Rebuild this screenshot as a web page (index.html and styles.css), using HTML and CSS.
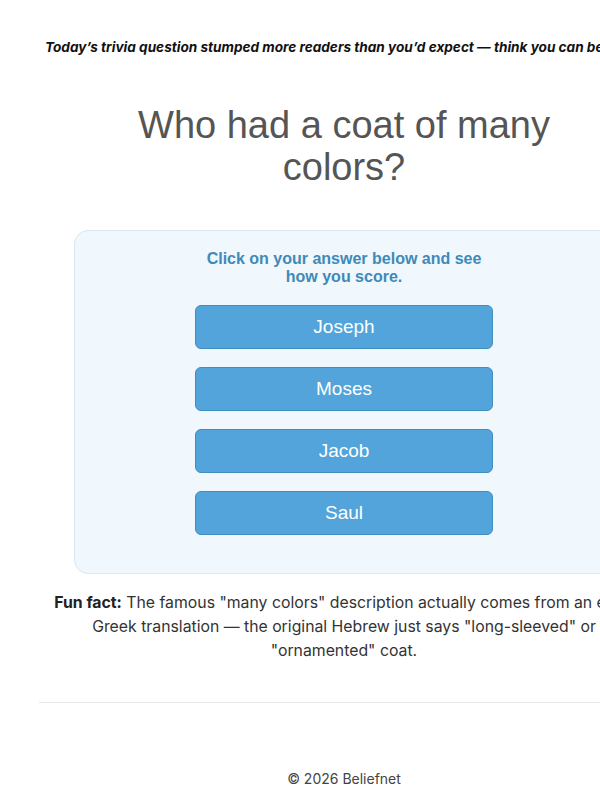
FILE: index.html
```html
<!DOCTYPE html>
<html lang="en">
<head>
    <meta charset="UTF-8">
    <title>Daily Bible Trivia</title>
    <link rel="stylesheet" href="styles.css">
</head>
<body>
<div class="page">

    <p class="teaser">Today’s trivia question stumped more readers than you’d expect — think you can beat the odds?</p>

    <h1 class="question">Who had a coat of many colors?</h1>

    <div class="quiz">
        <p class="prompt">Click on your answer below and see how you score.</p>
        <div class="answers">
            <button class="answer" type="button">Joseph</button>
            <button class="answer" type="button">Moses</button>
            <button class="answer" type="button">Jacob</button>
            <button class="answer" type="button">Saul</button>
        </div>
    </div>

    <p class="fact"><b>Fun fact:</b> The famous "many colors" description actually comes from an early Greek translation — the original Hebrew just says "long-sleeved" or "ornamented" coat.</p>

    <footer class="footer">© 2026 Beliefnet</footer>

</div>
</body>
</html>
```

FILE: styles.css
```css
html {
    overflow-x: hidden;
}

body {
    margin: 0;
    background: #fff;
    font-family: Inter, "Noto Sans", sans-serif;
}

.page {
    width: 610px;
    margin-left: 39px;
    padding-top: 38px;
}

.teaser {
    margin: 0;
    padding-left: 6px;
    font-size: 13.6px;
    line-height: 18px;
    font-weight: 700;
    font-style: italic;
    color: #111;
    white-space: nowrap;
}

.question {
    max-width: 460px;
    margin: 48px auto 42px;
    font-family: "Liberation Sans", Arial, sans-serif;
    font-weight: 400;
    font-size: 38px;
    line-height: 42px;
    color: #555;
    text-align: center;
}

.quiz {
    margin: 0 35px;
    padding: 19px 20px 20px;
    background: #f0f7fd;
    border: 1px solid #d9e8f3;
    border-radius: 14px;
    text-align: center;
}

.prompt {
    max-width: 280px;
    margin: 0 auto 19px;
    font-family: "Liberation Sans", Arial, sans-serif;
    font-size: 16px;
    font-weight: 700;
    line-height: 18px;
    color: #3e8ab8;
}

.answers {
    display: flex;
    flex-direction: column;
    align-items: center;
    gap: 18px;
    margin-bottom: 18px;
}

.answer {
    width: 298px;
    height: 44px;
    background: #52a4da;
    border: 1px solid #3f8dc1;
    border-radius: 6px;
    color: #fff;
    font-family: "Liberation Sans", Arial, sans-serif;
    font-size: 19px;
    cursor: pointer;
}

.fact {
    max-width: 600px;
    margin: 17px auto 39px;
    font-size: 15.8px;
    line-height: 24px;
    color: #333;
    text-align: center;
}

.fact b {
    color: #222;
}

.footer {
    border-top: 1px solid #e6e6e6;
    padding-top: 66px;
    font-size: 14px;
    line-height: 20px;
    color: #444;
    text-align: center;
}
```
